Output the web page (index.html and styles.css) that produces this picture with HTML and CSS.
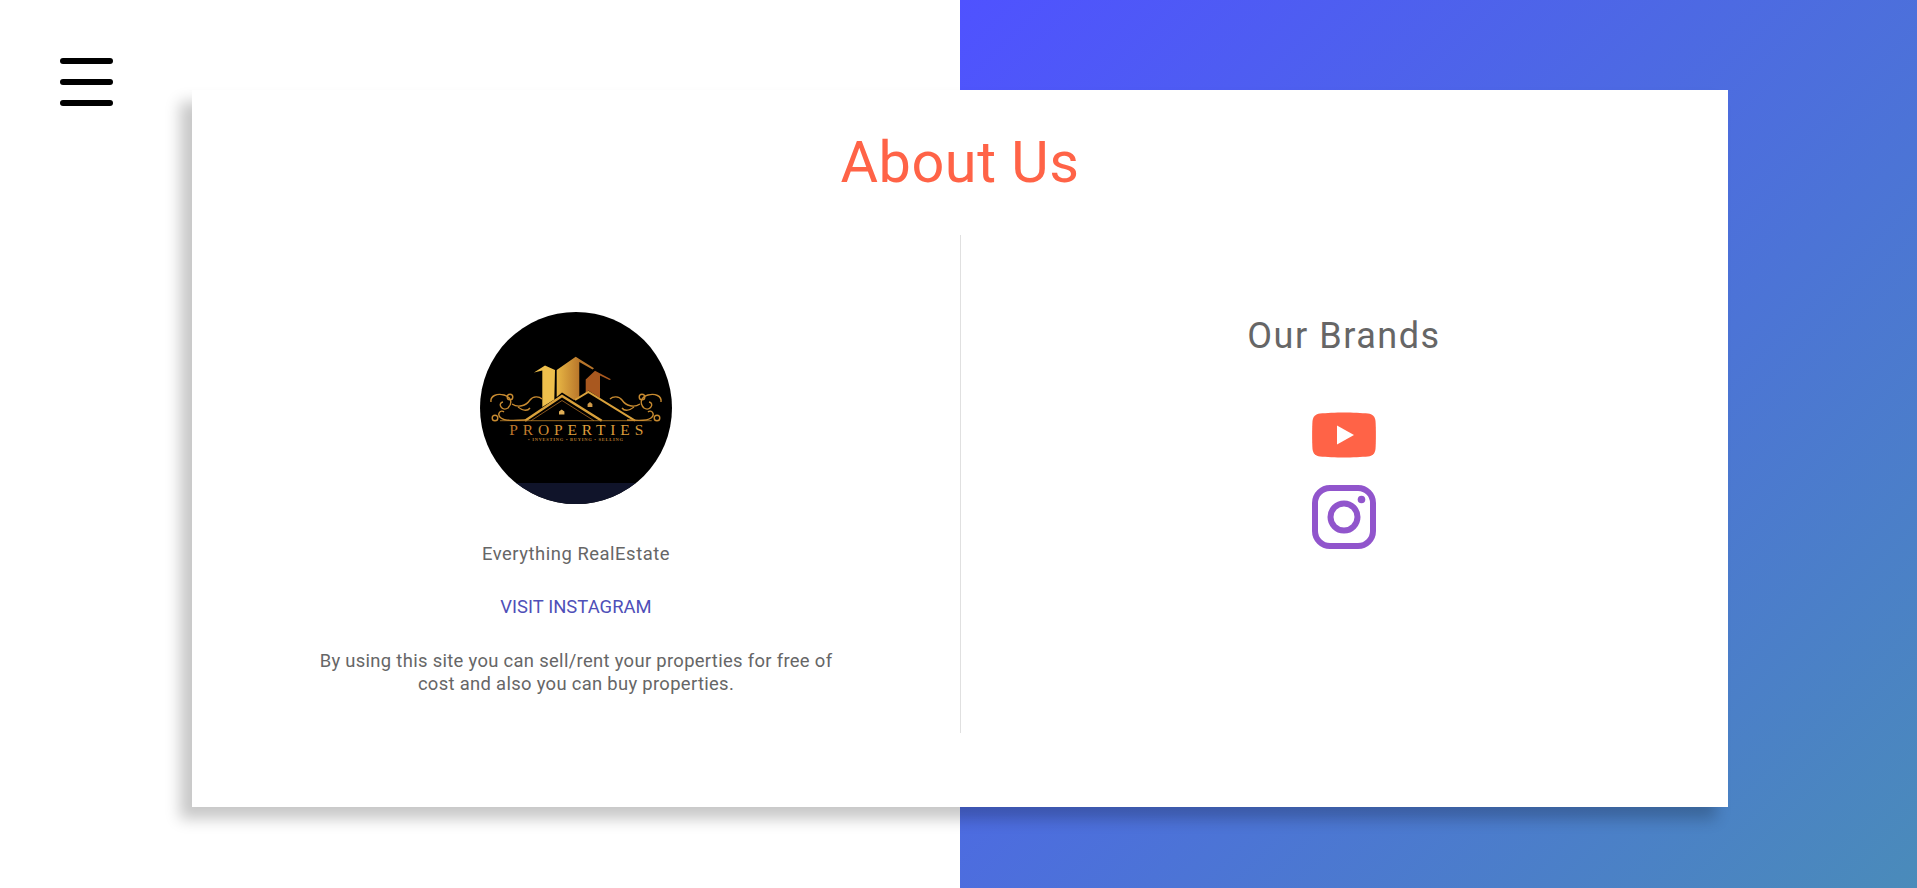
FILE: index.html
```html
<!DOCTYPE html>
<html lang="en">
<head>
<meta charset="utf-8">
<title>About Us</title>
<link rel="stylesheet" href="styles.css">
</head>
<body>
<div class="backdrop"></div>
<button class="menu-btn" aria-label="Menu"><span></span><span></span><span></span></button>
<main class="card">
  <h1 class="title">About Us</h1>
  <div class="columns">
    <section class="col col-left">
      <svg class="logo" viewBox="0 0 192 192" aria-label="Properties logo">
        <defs>
          <linearGradient id="goldM" gradientUnits="userSpaceOnUse" x1="76" x2="100" y1="0" y2="0">
            <stop offset="0" stop-color="#e9b845"/><stop offset="1" stop-color="#b8752a"/>
          </linearGradient>
          <linearGradient id="goldT" gradientUnits="userSpaceOnUse" x1="29" x2="163" y1="0" y2="0">
            <stop offset="0" stop-color="#b8722a"/><stop offset=".5" stop-color="#e0a23c"/><stop offset="1" stop-color="#d89a3a"/>
          </linearGradient>
          <clipPath id="round"><circle cx="96" cy="96" r="96"/></clipPath>
        </defs>
        <g clip-path="url(#round)">
          <rect width="192" height="192" fill="#000"/>
          <rect y="171" width="192" height="21" fill="#10142a"/>
          <path d="M62.300 58.500 54 60.600 65 53.500 75 58 74.300 87.500 62.300 95Z" fill="#eebf4c"/>
          <path d="M76.700 58 95.700 44.700 114 56.300 112.600 57.500 99.300 50 99.300 86 94 88 82 80.500 76.700 85Z" fill="url(#goldM)"/>
          <path d="M105.700 81V67.500L115 58.700 131 67.300 129.500 68 120 63.500V86L108.300 78.500Z" fill="#a9581f"/>
          <g fill="none" stroke="#d9a13b">
            <path d="M45 108.700 82 84 121.700 108.700" stroke-width="2.400"/>
            <path d="M95 88 108.300 80 155 108.700" stroke-width="2"/>
            <path d="M51 108.700 82 88.500 114 108.700" stroke-width=".8" stroke="#a86a25"/>
            <path d="M20 108.700H171.700" stroke-width=".8" stroke="#b98029"/>
            <g id="curl" stroke-width="1.400" stroke="#c78a30">
              <path d="M45 108C36 108 26 110 21 106 16 102 21 97 24 100"/>
              <path d="M11 90C10 84 17 81 24 83 31 85 33 91 28 96 22 100 17 91 23 90"/>
              <path d="M32 92C38 96 46 94 50 88 53 84 59 84 62 87"/>
              <path d="M38 95C42 98 47 100 50 96"/>
              <circle cx="15" cy="106" r="2.800"/>
              <circle cx="30" cy="85" r="2.800"/>
            </g>
            <use href="#curl" transform="matrix(-1 0 0 1 192 0)"/>
          </g>
          <path d="M79 99.500 81.700 97.500 84.400 99.500V102.500H79Z" fill="#e0ae55"/>
          <path d="M107.600 92 110 90 112.400 92V95H107.600Z" fill="#d09a48"/>
          <text class="logo-name" x="29.300" y="122.500" textLength="134" fill="url(#goldT)">PROPERTIES</text>
          <text class="logo-sub" x="48" y="128.500" textLength="95" fill="#b87c2c">• INVESTING • BUYING • SELLING</text>
        </g>
      </svg>
      <p class="tagline">Everything RealEstate</p>
      <a class="visit" href="#">VISIT INSTAGRAM</a>
      <p class="desc">By using this site you can sell/rent your properties for free of cost and also you can buy properties.</p>
    </section>
    <section class="col col-right">
      <h2 class="brands">Our Brands</h2>
      <a class="brand" href="#" aria-label="YouTube">
        <svg class="brand-icon" viewBox="0 0 64 64">
          <path d="M8 10.500C14 10 24 9.500 32 9.500S50 10 56 10.500C60.500 11 63 13.500 63.500 18 64 24 64 40 63.500 46 63 50.500 60.500 53 56 53.500 50 54 40 54.500 32 54.500S14 54 8 53.500C3.500 53 1 50.500.5 46 0 40 0 24 .5 18 1 13.500 3.500 11 8 10.500Z" fill="#ff6347"/>
          <path d="M25 22.500 42 32 25 41.500Z" fill="#fff"/>
        </svg>
      </a>
      <a class="brand" href="#" aria-label="Instagram">
        <svg class="brand-icon" viewBox="0 0 64 64" fill="none" stroke="#9155cc">
          <rect x="3" y="3" width="58" height="58" rx="15" stroke-width="6"/>
          <circle cx="32" cy="32" r="13.500" stroke-width="6"/>
          <circle cx="49.500" cy="14.500" r="3.800" fill="#9155cc" stroke="none"/>
        </svg>
      </a>
    </section>
  </div>
</main>
</body>
</html>
```
FILE: styles.css
```css
* { box-sizing: border-box; }
html, body { margin: 0; height: 100%; overflow: hidden; }
body {
  position: relative;
  height: 888px;
  background: #fff;
  font-family: Roboto, "Liberation Sans", sans-serif;
}
.backdrop {
  position: absolute;
  top: 0;
  bottom: 0;
  left: 960px;
  right: 0;
  background: linear-gradient(135deg, #4f52ff 0%, #4a8bba 100%);
}
.menu-btn {
  position: absolute;
  left: 60px;
  top: 58px;
  width: 53px;
  height: 48px;
  padding: 0;
  border: 0;
  background: none;
  display: flex;
  flex-direction: column;
  justify-content: space-between;
}
.menu-btn span {
  display: block;
  height: 6px;
  border-radius: 3px;
  background: #000;
}
.card {
  position: absolute;
  left: 192px;
  top: 90px;
  width: 1536px;
  height: 717px;
  background: #fff;
  box-shadow: -12px 12px 14px rgba(0, 0, 0, .22);
  display: flex;
  flex-direction: column;
}
.title {
  margin: 38px 0 0;
  height: 107px;
  font-size: 57.600px;
  line-height: 70px;
  font-weight: 400;
  letter-spacing: .55px;
  text-align: center;
  color: #ff6347;
}
.columns {
  display: grid;
  grid-template-columns: 1fr 1fr;
  height: 498px;
}
.col {
  display: flex;
  flex-direction: column;
  align-items: center;
}
.col-left {
  padding-top: 77px;
  color: #666;
}
.logo {
  display: block;
  width: 192px;
  height: 192px;
}
.logo-name {
  font-family: "Liberation Serif", serif;
  font-size: 15.500px;
}
.logo-sub {
  font-family: "Liberation Serif", serif;
  font-size: 4.500px;
  font-weight: 700;
}
.tagline {
  margin: 38px 0 0;
  font-size: 18.400px;
  letter-spacing: .54px;
  line-height: 24px;
}
.visit {
  margin-top: 29px;
  font-size: 18.400px;
  letter-spacing: .05px;
  line-height: 24px;
  color: #4f4fb8;
  text-decoration: none;
}
.desc {
  margin: 30px 0 0;
  width: 530px;
  font-size: 18.400px;
  letter-spacing: .32px;
  line-height: 23px;
  text-align: center;
}
.col-right {
  padding: 80px 1px 0 0;
  border-left: 1px solid #e0e0e0;
}
.brands {
  margin: 0 0 46px;
  font-size: 36px;
  line-height: 42px;
  font-weight: 400;
  letter-spacing: 1.550px;
  color: #666;
}
.brand {
  display: block;
  height: 64px;
  margin-bottom: 18px;
}
.brand-icon {
  display: block;
  width: 64px;
  height: 64px;
}
```
